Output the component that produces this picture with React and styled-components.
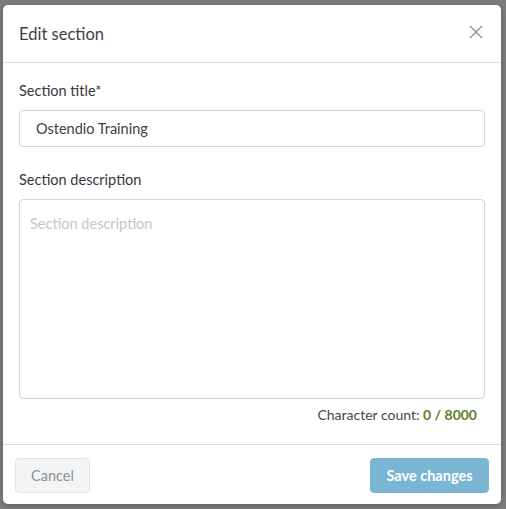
import styled, { createGlobalStyle } from "styled-components";

const GlobalStyle = createGlobalStyle`
  html, body {
    margin: 0;
    padding: 0;
    background: #7b7b7b;
    font-family: Lato, "Noto Sans", sans-serif;
  }
  * {
    box-sizing: border-box;
  }
`;

const Overlay = styled.div`
  width: 506px;
  height: 509px;
  padding: 5px 5px 5px 3px;
  background: #7b7b7b;
`;

const Modal = styled.div`
  width: 498px;
  height: 499px;
  background: #ffffff;
  border-radius: 5px;
  display: flex;
  flex-direction: column;
  box-shadow: 0 1px 4px rgba(0, 0, 0, 0.25);
`;

const Header = styled.div`
  height: 58px;
  display: flex;
  align-items: center;
  justify-content: space-between;
  padding: 0 16px 0 16px;
  border-bottom: 1px solid #dedee3;
`;

const Title = styled.h2`
  margin: 0;
  font-size: 16.5px;
  font-weight: 400;
  color: #3a3f46;
`;

const CloseButton = styled.button`
  border: none;
  background: none;
  padding: 0;
  width: 18px;
  height: 18px;
  display: flex;
  align-items: center;
  justify-content: center;
  margin-top: -3px;
  cursor: pointer;
`;

const Body = styled.div`
  flex: 1;
  padding: 17px 16px 0 16px;
  display: flex;
  flex-direction: column;
`;

const Label = styled.label`
  font-size: 14.5px;
  line-height: 22px;
  color: #33373c;
  margin-bottom: 8px;
`;

const Field = styled.div`
  display: flex;
  flex-direction: column;
  margin-bottom: ${(p) => p.$gap || 0}px;
`;

const Input = styled.input`
  height: 37px;
  border: 1px solid #d3d5d8;
  border-radius: 4px;
  padding: 0 16px;
  font-family: inherit;
  font-size: 14.5px;
  color: #3a3f44;
  outline: none;
`;

const TextArea = styled.textarea`
  height: 200px;
  border: 1px solid #d3d5d8;
  border-radius: 4px;
  padding: 15px 10px;
  font-family: inherit;
  font-size: 14.5px;
  color: #3a3f44;
  resize: none;
  outline: none;
  &::placeholder {
    color: #c3c6c9;
  }
`;

const Counter = styled.div`
  text-align: right;
  padding-right: 8px;
  margin-top: 5px;
  font-size: 14px;
  line-height: 22px;
  color: #43474c;
`;

const Count = styled.span`
  color: #5f7d1e;
  font-weight: 700;
`;

const Footer = styled.div`
  height: 60px;
  border-top: 1px solid #dedee3;
  display: flex;
  align-items: center;
  justify-content: space-between;
  padding: 1px 12px 0 12px;
`;

const Button = styled.button`
  height: 35px;
  border-radius: 4px;
  font-family: inherit;
  font-size: 14.5px;
  padding: 0;
  white-space: nowrap;
  cursor: pointer;
  border: 1px solid ${(p) => (p.$primary ? "#79b6d4" : "#e1e3e5")};
  background: ${(p) => (p.$primary ? "#79b6d4" : "#f3f4f5")};
  color: ${(p) => (p.$primary ? "#ffffff" : "#8b9095")};
  font-weight: ${(p) => (p.$primary ? 700 : 400)};
  width: ${(p) => (p.$primary ? "119px" : "75px")};
`;

const App = () => {
  return (
    <>
      <GlobalStyle />
      <Overlay>
        <Modal>
          <Header>
            <Title>Edit section</Title>
            <CloseButton aria-label="Close">
              <svg width="14" height="14" viewBox="0 0 14 14">
                <path
                  d="M1 1 L13 13 M13 1 L1 13"
                  stroke="#8d9195"
                  strokeWidth="1.4"
                  fill="none"
                />
              </svg>
            </CloseButton>
          </Header>
          <Body>
            <Field $gap={22}>
              <Label>Section title*</Label>
              <Input defaultValue="Ostendio Training" />
            </Field>
            <Field>
              <Label>Section description</Label>
              <TextArea placeholder="Section description" />
            </Field>
            <Counter>
              Character count: <Count>0 / 8000</Count>
            </Counter>
          </Body>
          <Footer>
            <Button>Cancel</Button>
            <Button $primary>Save changes</Button>
          </Footer>
        </Modal>
      </Overlay>
    </>
  );
};

export default App;
